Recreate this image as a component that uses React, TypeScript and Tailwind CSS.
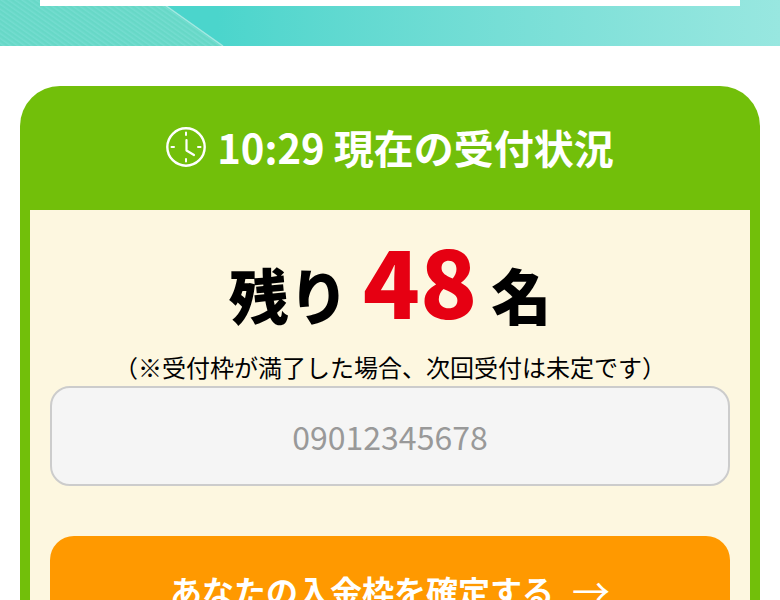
const font = "font-['Noto_Sans_CJK_JP','Noto_Sans',sans-serif]";

function ClockIcon() {
  return (
    <svg width="40" height="40" viewBox="0 0 40 40" fill="none" stroke="white" strokeLinecap="round" className="shrink-0">
      <circle cx="20" cy="20" r="18.7" strokeWidth="2.4" />
      <path d="M20 5.5v2.5M20 32v2.5M5.5 20h2.5M32 20h2.5" strokeWidth="2" />
      <path d="M20.5 13v10.5L28 28" strokeWidth="2.2" strokeLinejoin="round" />
    </svg>
  );
}

function Banner() {
  return (
    <div className="relative h-[46px] overflow-hidden bg-gradient-to-r from-[#4bd5cc] from-[28%] to-[#98e7e0]">
      {/* striped wedge at the left */}
      <svg className="absolute inset-0" width="240" height="46" viewBox="0 0 240 46">
        <defs>
          <pattern id="stripes" width="4" height="4" patternUnits="userSpaceOnUse" patternTransform="rotate(-55)">
            <rect width="4" height="4" fill="#67d8c7" />
            <rect width="1.5" height="4" fill="#74ddd0" />
          </pattern>
        </defs>
        <polygon points="0,0 159,0 223,46 0,46" fill="url(#stripes)" />
        <path d="M162 3 L223 46" stroke="#a2e9e2" strokeWidth="1.5" fill="none" />
      </svg>
      <div className="relative mx-[40px] h-[6px] bg-white" />
    </div>
  );
}

export default function App() {
  return (
    <div className={`h-[600px] overflow-hidden bg-white ${font}`}>
      <Banner />
      <div className="mx-[20px] mt-[40px] rounded-t-[40px] bg-[#72bf0a] px-[10px]">
        <div className="flex h-[124px] items-center justify-center gap-[11px] pb-[2px]">
          <ClockIcon />
          <h2 className="text-[40px] leading-none font-bold text-white">10:29 現在の受付状況</h2>
        </div>
        <div className="bg-[#fdf7e0] px-[20px] pb-[40px]">
          <p className="flex h-[126px] items-center justify-center gap-[14px] pt-[22px] text-black">
            <span className="mt-[20px] text-[60px] leading-none font-black">残り</span>
            <span className="mb-[13px] text-[94px] leading-none font-black text-[#e60012]">48</span>
            <span className="mt-[20px] text-[60px] leading-none font-black">名</span>
          </p>
          <p className="h-[50px] text-center text-[24px] leading-[62px] text-black">（※受付枠が満了した場合、次回受付は未定です）</p>
          <input
            type="text"
            placeholder="09012345678"
            className="block h-[100px] w-full rounded-[20px] border-2 border-[#ccc] bg-[#f5f5f5] text-center text-[32px] outline-none placeholder:text-[#999]"
          />
          <button className="mt-[50px] flex h-[100px] w-full items-center justify-center gap-[18px] rounded-[24px] bg-[#ff9900] pt-[8px] text-[32px] font-bold text-white">
            <span>あなたの入金枠を確定する</span>
            <span className="text-[38px] leading-none font-normal">→</span>
          </button>
        </div>
      </div>
    </div>
  );
}
